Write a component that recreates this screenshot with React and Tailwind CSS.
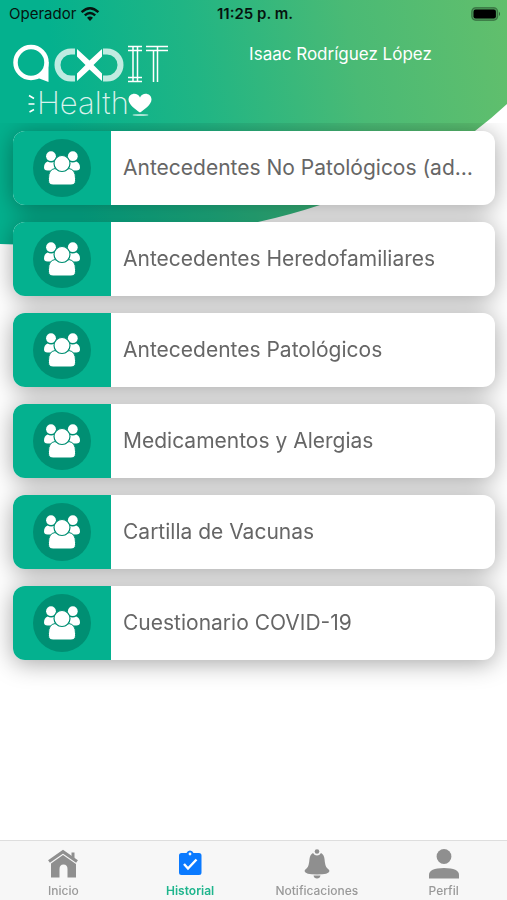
const records = [
  'Antecedentes No Patológicos (adicciones)',
  'Antecedentes Heredofamiliares',
  'Antecedentes Patológicos',
  'Medicamentos y Alergias',
  'Cartilla de Vacunas',
  'Cuestionario COVID-19',
];

const tabs = [
  { id: 'inicio',         label: 'Inicio',         icon: HomeIcon },
  { id: 'historial',      label: 'Historial',      icon: ClipboardIcon, active: true },
  { id: 'notificaciones', label: 'Notificaciones', icon: BellIcon },
  { id: 'perfil',         label: 'Perfil',         icon: PersonIcon },
];

function Wave() {
  return (
    <svg className="absolute inset-x-0 top-0 w-full h-[246px]" viewBox="0 0 507 246" preserveAspectRatio="none" aria-hidden="true">
      <defs>
        <linearGradient id="wave" gradientUnits="userSpaceOnUse" x1="60" y1="100" x2="510" y2="20">
          <stop offset="0" stopColor="#04b18e" />
          <stop offset="0.3" stopColor="#20b584" />
          <stop offset="0.65" stopColor="#4aba75" />
          <stop offset="1" stopColor="#62bf6c" />
        </linearGradient>
      </defs>
      <path d="M0 0H507V104Q492 118 475 131Q405 178 320 205Q290 215 258 222Q140 250 0 244Z" fill="url(#wave)" />
    </svg>
  );
}

function WifiIcon() {
  return (
    <svg className="w-5 h-4" viewBox="0 0 20 16" fill="none" stroke="#06140f" strokeWidth="2.4" aria-hidden="true">
      <path d="M1.6 6.2Q10 -1.6 18.4 6.2" />
      <path d="M4.8 9.4Q10 4.6 15.2 9.4" />
      <path d="M7 11.8Q10 9.2 13 11.8L10 15Z" fill="#06140f" stroke="none" />
    </svg>
  );
}

function BatteryIcon() {
  return (
    <svg className="w-[30px] h-[14px]" viewBox="0 0 30 14" aria-hidden="true">
      <rect x="0.7" y="0.7" width="26" height="12.6" rx="4" fill="#000" fillOpacity="0.2" stroke="#000" strokeOpacity="0.3" strokeWidth="1.2" />
      <rect x="2.5" y="2.5" width="22.4" height="9" rx="2.2" fill="#000" />
      <path d="M28 4.8Q30 7 28 9.2Z" fill="#000" fillOpacity="0.5" />
    </svg>
  );
}

function Logo() {
  return (
    <svg className="w-[160px] h-[80px]" viewBox="10 42 160 80" fill="none" stroke="#fff" role="img" aria-label="acoIT Health">
      {/* speech bubble a */}
      <circle cx="31" cy="62.500" r="15.500" strokeWidth="4.500" />
      <path d="M48.500 62V82L38 78L45 71V62Z" fill="#fff" stroke="none" />
      {/* infinity loop */}
      <g strokeWidth="6" strokeOpacity="0.74">
        <path d="M75 51.500H71A13.500 13.500 0 0 0 71 78.500H75" />
        <path d="M103 51.500H107A13.500 13.500 0 0 1 107 78.500H103" />
      </g>
      <path d="M77 49L89.500 60.500L102 49V56.500L93.500 65L102 73.500V81L89.500 69.500L77 81V73.500L85.500 65L77 56.500Z" fill="#fff" stroke="none" />
      {/* double line IT */}
      <g strokeWidth="1.500">
        <path d="M128 46.500H142M128 50.500H142M128 77.500H142M128 81.500H142M133 46.500V81.500M137.500 46.500V81.500" />
        <path d="M146 46.500H168M146 50.500H168M153.500 50.500V82M157.500 46.500V82" />
      </g>
      <path d="M29 95.500L34 98.500M28.500 104H34.500M29.500 112L34 109.500" strokeWidth="1.600" />
      <text x="37" y="114" fontFamily="Inter, sans-serif" fontSize="31" fontWeight="200" fill="#fff" fillOpacity="0.85" stroke="none">Health</text>
      <path d="M140 112.500C136 110 128.500 104.500 128.500 99.500C128.500 93 137.500 91.500 140 97.500C142.500 91.500 151.500 93 151.500 99.500C151.500 104.500 144 110 140 112.500Z" fill="#fff" stroke="none" />
      <ellipse cx="140.500" cy="115" rx="8" ry="1" fill="#fff" fillOpacity="0.65" stroke="none" />
    </svg>
  );
}

function GroupIcon() {
  return (
    <svg className="w-9 h-[34px]" viewBox="0 0 36 34" fill="#fff" aria-hidden="true">
      <circle cx="7" cy="5.200" r="4.900" />
      <circle cx="28.800" cy="5.200" r="4.900" />
      <path d="M3.500 10.500Q7 12.500 11 10.500Q10.500 17 13 19.500H3.500Q0 19.500 0 16.500Q0 12 3.500 10.500Z" />
      <path d="M32.300 10.500Q28.800 12.500 25 10.500Q25.300 17 22.800 19.500H32.300Q36 19.500 36 16.500Q36 12 32.300 10.500Z" />
      <path d="M11 17.500Q18 22.500 25 17.500Q31.500 18.500 31.500 27.500V29.500Q31.500 34 27 34H9Q4.500 34 4.500 29.500V27.500Q4.500 18.500 11 17.500Z" stroke="#008f73" strokeWidth="1" />
      <circle cx="18" cy="12.500" r="8" stroke="#008f73" strokeWidth="1.200" />
    </svg>
  );
}

function HomeIcon() {
  return (
    <svg className="w-[30px] h-[30px]" viewBox="0 0 30 30" aria-hidden="true">
      <path d="M1 12.500L15 2.800L29 12.500" fill="none" stroke="#8f8f8f" strokeWidth="3.200" />
      <path d="M23.500 3.500H26.500V9.500L23.500 7.500Z" fill="#8f8f8f" />
      <path d="M15 6L28 15V28.500H19.500V20Q19.500 15.500 15.500 15.500Q11.500 15.500 11.500 20V28.500H3V14.500Z" fill="#8f8f8f" />
    </svg>
  );
}

function ClipboardIcon() {
  return (
    <svg className="w-[30px] h-[30px]" viewBox="0 0 30 30" aria-hidden="true">
      <path d="M6.500 4H11.500Q12.500 1.500 15 1.500Q17.500 1.500 18.500 4H24Q26.500 4 26.500 6.500V23.500Q26.500 26 24 26H6.500Q4 26 4 23.500V6.500Q4 4 6.500 4Z" fill="#0a7aff" />
      <circle cx="15" cy="5" r="1.400" fill="#f7f7f7" />
      <path d="M9 15L13 19.500L21.500 10.500" fill="none" stroke="#fff" strokeWidth="2.400" />
    </svg>
  );
}

function BellIcon() {
  return (
    <svg className="w-[30px] h-[30px]" viewBox="0 0 30 30" fill="#8f8f8f" aria-hidden="true">
      <circle cx="15" cy="2.500" r="2.300" />
      <path d="M11 4Q12.500 6.500 15 6.500Q17.500 6.500 19 4Q22 5.500 22.500 10Q23 17 25 19Q27.500 21 27.500 22Q27 25.500 15 25.500Q3 25.500 2.500 22Q2.500 21 5 19Q7 17 7.500 10Q8 5.500 11 4Z" />
      <path d="M11.500 26.500H18.500Q18 29.500 15 29.500Q12 29.500 11.500 26.500Z" />
    </svg>
  );
}

function PersonIcon() {
  return (
    <svg className="w-[30px] h-[30px]" viewBox="0 0 30 30" fill="#8f8f8f" aria-hidden="true">
      <circle cx="15" cy="7.500" r="7.400" />
      <path d="M0 29.500V26Q0 19 15 19Q30 19 30 26V29.500Z" />
    </svg>
  );
}

function RecordCard({ title }) {
  return (
    <li>
      <button type="button" className="flex w-full h-[74px] rounded-xl overflow-hidden bg-white text-left">
        <span className="flex items-center justify-center w-[98px] h-full shrink-0 bg-[#04b18f]">
          <span className="flex items-center justify-center w-[58px] h-[58px] rounded-full bg-[#008f73]">
            <GroupIcon />
          </span>
        </span>
        <span className="self-center min-w-0 flex-1 truncate pl-3 pr-5 text-[21px] leading-8 text-[#666]">{title}</span>
      </button>
    </li>
  );
}

export default function App() {
  return (
    <div className="relative flex flex-col min-h-screen bg-white font-[Inter,sans-serif]">
      <Wave />

      <header className="relative text-white">
        <div className="grid grid-cols-[1fr_auto_1fr] items-center h-7 pl-[9px] pr-[6px] text-[15px] text-[#06140f]">
          <div className="flex items-center gap-1">
            <span>Operador</span>
            <WifiIcon />
          </div>
          <span className="font-semibold">11:25 p. m.</span>
          <div className="flex justify-end">
            <BatteryIcon />
          </div>
        </div>
        <div className="flex h-[95px] pt-[14px] pl-[10px]">
          <Logo />
          <h1 className="flex-1 pl-1 text-center text-[17px] leading-6">Isaac Rodríguez López</h1>
        </div>
      </header>

      <main className="relative flex-1 overflow-hidden pl-[13px] pr-3 pt-2 pb-10">
        <ul className="flex flex-col gap-[17px] drop-shadow-[0_3px_12px_rgba(0,0,0,0.36)]">
          {records.map((title) => <RecordCard key={title} title={title} />)}
        </ul>
      </main>

      <nav className="sticky bottom-0 grid grid-cols-4 h-[60px] border-t border-[#dedede] bg-[#f7f7f7]">
        {tabs.map(({ id, label, icon: Icon, active }) => (
          <a key={id} href={`#${id}`} aria-current={active ? 'page' : undefined}
            className={`flex flex-col items-center pt-2 text-[12px] leading-6 ${
              active ? 'font-semibold text-[#1fb58d]' : 'font-medium text-[#999]'
            }`}>
            <Icon />
            {label}
          </a>
        ))}
      </nav>
    </div>
  );
}
